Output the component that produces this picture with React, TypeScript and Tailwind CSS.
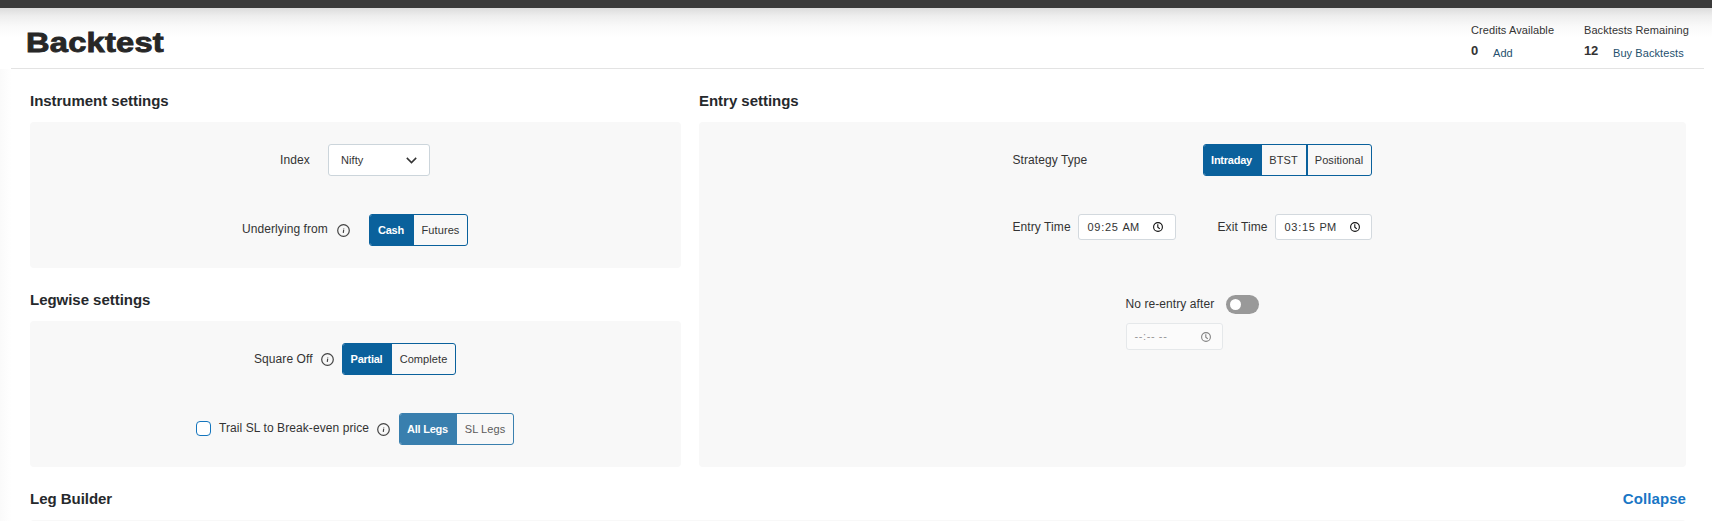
import type { ReactNode } from "react";
import clsx from "clsx";

function InfoIcon({ className }: { className?: string }) {
  return (
    <svg className={clsx("size-[13px] shrink-0", className)} viewBox="0 0 13 13" fill="none" stroke="#444">
      <circle cx="6.5" cy="6.5" r="5.8" strokeWidth="1.2" />
      <path d="M6.7 5.6L6.3 8.9" strokeWidth="1.2" />
      <path d="M6.8 4V4.7" strokeWidth="0.8" />
    </svg>
  );
}

function ClockIcon() {
  return (
    <svg className="size-[10px] shrink-0" viewBox="0 0 10 10" fill="none" stroke="#111" strokeWidth="1.1">
      <circle cx="5" cy="5" r="4.4" />
      <path d="M4.8 2.2V5.2L6.8 6.9" />
    </svg>
  );
}

type Option = { label: string; width: string };

function Segmented({ options, className }: { options: Option[]; className?: string }) {
  return (
    <div className={clsx("flex h-8 shrink-0 overflow-hidden rounded-[3px] border border-[#0a619c] text-[11px]", className)}>
      {options.map((o, i) => (
        <button
          key={o.label}
          className={clsx(
            "flex shrink-0 items-center justify-center whitespace-nowrap",
            o.width,
            i === 0 ? "bg-[#0a619c] pr-[2px] font-bold tracking-[-0.25px] text-white" : "text-[#333]",
            i > 1 && "border-l-2 border-[#0a619c]",
          )}
        >
          {o.label}
        </button>
      ))}
    </div>
  );
}

function TimeField({ time, half, className }: { time: string; half: ReactNode; className?: string }) {
  return (
    <div className={clsx("flex h-[26px] items-center rounded-[3px] border border-[#d3d9de] bg-white pl-2 text-[11px] text-[#333]", className)}>
      <span className="w-[36px] pl-px whitespace-nowrap tracking-[0.7px]">{time}</span>
      <span className="w-[30px] pt-px whitespace-nowrap">{half}</span>
      <ClockIcon />
    </div>
  );
}

function EmptyTimeField({ className }: { className?: string }) {
  return (
    <div className={clsx("flex h-[27px] items-center rounded-[3px] border border-[#d3d9de] bg-white pl-2 text-[11px] text-[#333]", className)}>
      <span className="w-[66px] tracking-[0.6px] whitespace-nowrap">--:-- --</span>
      <ClockIcon />
    </div>
  );
}

function Heading({ children }: { children: ReactNode }) {
  return <h2 className="text-[15px] leading-5 font-bold tracking-[-0.03px] text-[#26292c]">{children}</h2>;
}

export default function App() {
  return (
    <div className="h-[521px] w-[1712px] overflow-hidden bg-[linear-gradient(to_right,#fafafa,#ffffff_12px)] font-['Liberation_Sans',Arial,sans-serif] text-xs tracking-[0.08px] text-[#333]">
      <div className="h-2 bg-[#3a3a3a]" />
      <header className="flex h-[61px] bg-[linear-gradient(to_bottom,#dcdcdc,#eeeeee_8px,#f9f9f9_18px,#ffffff_30px)] pr-2 pl-[11px]">
        <div className="flex grow border-b border-[#e3e3e3]">
          <h1 className="mt-[19px] ml-[15px] origin-left scale-x-[1.165] self-start text-[28px] leading-8 font-bold tracking-[0.2px] text-[#272727] [-webkit-text-stroke:0.9px_#272727]">
            Backtest
          </h1>
          <div className="mt-[14px] ml-auto flex text-[11px] leading-4">
            <div className="w-[113px]">
              <div className="whitespace-nowrap">Credits Available</div>
              <div className="flex pt-[4px]">
                <b className="w-[22px] pt-px text-[13px] leading-4 tracking-[-0.3px]">0</b>
                <a className="pt-[3px] text-[#24506e]">Add</a>
              </div>
            </div>
            <div className="w-[120px]">
              <div className="whitespace-nowrap">Backtests Remaining</div>
              <div className="flex pt-[4px]">
                <b className="w-[29px] pt-px text-[13px] leading-4 tracking-[-0.3px]">12</b>
                <a className="pt-[3px] whitespace-nowrap text-[#24506e]">Buy Backtests</a>
              </div>
            </div>
          </div>
        </div>
      </header>

      <main className="pr-[26px] pl-[30px]">
        <div className="flex gap-[18px] pt-[22px]">
          <div className="w-[651px]">
            <Heading>Instrument settings</Heading>
            <section className="mt-[11px] flex h-[146px] flex-col gap-[38px] rounded bg-[#f8f8f8] pt-[22px]">
              <div className="flex h-8 items-center pl-[250px]">
                <span className="w-12">Index</span>
                <div className="flex h-8 w-[102px] items-center justify-between rounded-[3px] border border-[#ccd5db] bg-white pr-[12px] pl-3 text-[11px]">
                  Nifty
                  <svg className="h-[7px] w-[11px]" viewBox="0 0 11 7" fill="none" stroke="#333" strokeWidth="1.5">
                    <path d="M0.8 0.9L5.5 5.6L10.2 0.9" />
                  </svg>
                </div>
              </div>
              <div className="flex h-8 items-center pl-[212px]">
                <span className="w-[95px] pb-0.5 whitespace-nowrap">Underlying from</span>
                <InfoIcon />
                <Segmented className="ml-[19px]" options={[{ label: "Cash", width: "w-[44px]" }, { label: "Futures", width: "w-[53px]" }]} />
              </div>
            </section>

            <div className="pt-[22px]">
              <Heading>Legwise settings</Heading>
            </div>
            <section className="mt-[11px] flex h-[146px] flex-col gap-[38px] rounded bg-[#f8f8f8] pt-[22px]">
              <div className="flex h-8 items-center pl-[224px]">
                <span className="w-[67px] whitespace-nowrap">Square Off</span>
                <InfoIcon />
                <Segmented className="ml-2" options={[{ label: "Partial", width: "w-[49px]" }, { label: "Complete", width: "w-[63px]" }]} />
              </div>
              <div className="flex h-8 items-center pl-[166px]">
                <span className="mb-px size-[15px] rounded-[4px] border border-[#1475bd] bg-white" />
                <span className="ml-2 w-[158px] pb-0.5 whitespace-nowrap">Trail SL to Break-even price</span>
                <InfoIcon />
                <Segmented className="ml-[9px] opacity-80" options={[{ label: "All Legs", width: "w-[57px]" }, { label: "SL Legs", width: "w-[56px]" }]} />
              </div>
            </section>
          </div>

          <div className="grow">
            <Heading>Entry settings</Heading>
            <section className="mt-[11px] flex h-[345px] flex-col items-center rounded bg-[#f8f8f8] pt-[22px]">
              <div className="flex h-8 w-[360px] items-center justify-between pr-px">
                <span>Strategy Type</span>
                <Segmented
                  options={[
                    { label: "Intraday", width: "w-[58px]" },
                    { label: "BTST", width: "w-[44px]" },
                    { label: "Positional", width: "w-[65px]" },
                  ]}
                />
              </div>
              <div className="mt-[38px] flex h-[26px] w-[360px] items-center">
                <span className="w-[65px] whitespace-nowrap">Entry Time</span>
                <TimeField time="09:25" half="AM" className="w-[98px]" />
                <span className="ml-[42px] w-[57px] whitespace-nowrap">Exit Time</span>
                <TimeField time="03:15" half="PM" className="w-[97px]" />
              </div>
              <div className="mt-[55px] w-[134px]">
                <div className="flex h-[19px] items-center justify-between pr-px">
                  <span className="pb-0.5 whitespace-nowrap">No re-entry after</span>
                  <span className="flex h-[19px] w-[33px] items-center rounded-full bg-[#999] pl-1">
                    <span className="size-[11px] rounded-full bg-white" />
                  </span>
                </div>
                <EmptyTimeField className="mt-[9px] w-[97px] opacity-50" />
              </div>
            </section>
          </div>
        </div>

        <div className="flex items-center justify-between pt-[22px]">
          <Heading>Leg Builder</Heading>
          <a className="text-[15px] leading-5 font-bold text-[#1976c5]">Collapse</a>
        </div>
        <section className="mt-[11px] h-10 rounded bg-[#f8f8f8]" />
      </main>
    </div>
  );
}
